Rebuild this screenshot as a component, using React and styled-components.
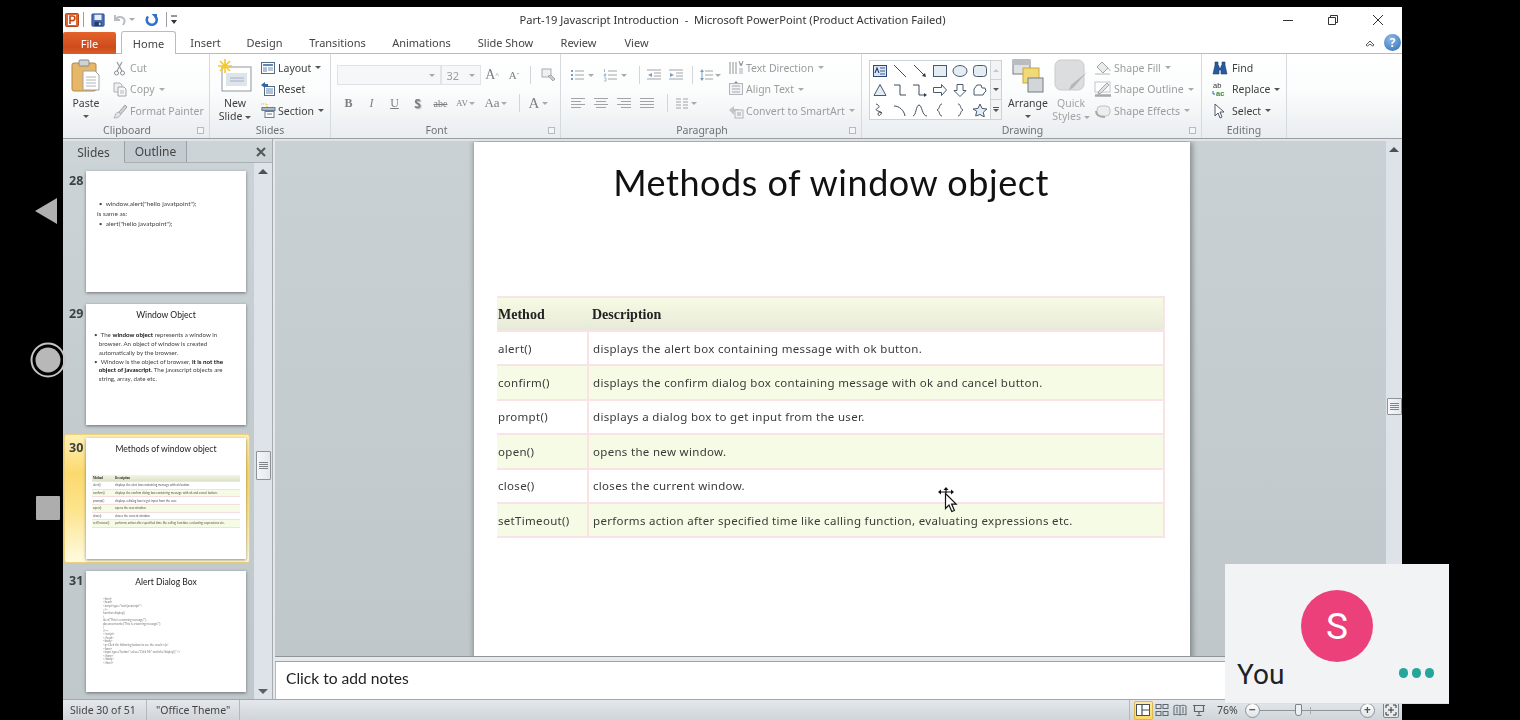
import React from 'react';
import styled, { createGlobalStyle } from 'styled-components';

const Global = createGlobalStyle`
  html, body { margin: 0; padding: 0; background: #000; }
  #root { width: 1520px; height: 720px; overflow: hidden; }
  * { box-sizing: border-box; }
`;

const UI = `"Noto Sans", "Open Sans", sans-serif`;
const CAL = `Lato, "Open Sans", sans-serif`;

const Screen = styled.div`
  position: relative; width: 1520px; height: 720px; background: #000; overflow: hidden;
  padding: 7px 118px 0 63px; font-family: ${UI};
`;
const Win = styled.div`
  width: 1339px; height: 713px; background: #fff; display: flex; flex-direction: column;
  filter: blur(0.4px);
`;

/* title bar */
const TitleBar = styled.div`
  height: 25px; flex: none; display: grid; grid-template-columns: 1fr auto 1fr; align-items: center; background: #fff;
`;
const Quick = styled.div`display: flex; align-items: center; padding-left: 2px; height: 100%;`;
const QSep = styled.span`width: 1px; height: 15px; background: #9aa0a6; margin: 0 ${p => p.$r}px 0 ${p => p.$l}px; flex: none;`;
const Spacer = styled.span`width: ${p => p.$w}px; flex: none;`;
const TitleText = styled.div`font-size: 11.15px; color: #333; white-space: pre;`;
const WinCtl = styled.div`display: flex; justify-content: flex-end; align-items: center; height: 100%;`;
const WinBtn = styled.span`width: 45px; display: flex; justify-content: center; margin-right:${p => p.$mr || 0}px;`;

/* tabs */
const TabRow = styled.div`
  height: 22px; flex: none; display: flex; align-items: flex-end; background: #fff; position: relative;
  border-bottom: 1px solid #b9bdc2;
`;
const FileTab = styled.div`
  width: 53px; height: 22px; margin-right: 5px; margin-bottom: -1px; display: flex; align-items: center; justify-content: center;
  background: linear-gradient(#e4642c, #cf4a1c 70%, #d95f2c); color: #fff; font-size: 11px; border-radius: 2px 2px 0 0;
`;
const Tab = styled.div`
  height: 22px; width: ${p => p.$w}px; display: flex; align-items: center; justify-content: center; font-size: 11px; color: #444;
  ${p => p.$on ? `background:#fff; border:1px solid #b9bdc2; border-bottom:0; border-radius:3px 3px 0 0; margin-bottom:-1px; height:23px;` : ''}
`;
const TabRight = styled.div`margin-left: auto; height: 100%; display: flex; align-items: center; gap: 9px; padding-right: 1px;`;
const Help = styled.span`
  width: 17px; height: 17px; border-radius: 50%; background: radial-gradient(circle at 40% 30%, #8db8e8, #2f6db5);
  color: #fff; font: bold 12px ${UI}; display: flex; align-items: center; justify-content: center;
`;

/* ribbon */
const Ribbon = styled.div`
  height: 85px; flex: none; display: flex; background: linear-gradient(#fff, #fbfcfc 45%, #e9edf0);
  border-bottom: 1px solid #9b9fa3;
`;
const Group = styled.div`
  width: ${p => p.$w}px; flex: none; display: flex; flex-direction: column; border-right: 1px solid #d5dade;
`;
const GroupBody = styled.div`height: 68px; display: flex; padding: 3px 0 0 ${p => p.$pl || 0}px;`;
const GroupLabel = styled.div`
  height: 16px; position: relative; text-align: center; font-size: 10.5px; line-height: 16px; color: #6f7377;
  padding-right: ${p => p.$launch ? 18 : 0}px;
`;
const Launcher = styled.span`
  position: absolute; right: 5px; top: 5px; width: 7px; height: 7px; border: 1px solid #b5bac0; background: #f4f5f6;
`;
const Big = styled.div`
  width: ${p => p.$w || 36}px; flex: none; display: flex; flex-direction: column; align-items: center; padding-top: 1px;
  font-size: 10.5px; line-height: 13px; color: ${p => p.$off ? '#a3a5a7' : '#3f3f3f'}; text-align: center;
  margin-left: ${p => p.$ml || 0}px;
  svg { margin-bottom: 3px; flex: none; }
`;
const Stack = styled.div`display: flex; flex-direction: column; margin-left: ${p => p.$ml || 0}px;`;
const Small = styled.div`
  height: 21.5px; display: flex; align-items: center; gap: 2px; font-size: 10.5px; white-space: nowrap;
  color: ${p => p.$off ? '#9b9da0' : '#3f3f3f'};
`;
const Caret = styled.span`
  display: inline-block; width: 0; height: 0; border: 3px solid transparent; border-top: 3px solid ${p => p.$off ? '#a8aaad' : '#555'};
  border-bottom: 0; margin: ${p => p.$mt || 0}px ${p => p.$m ?? 2}px 0; vertical-align: middle; flex: none;
`;
const Rows = styled.div`display: flex; flex-direction: column; gap: 8px; padding-top: 8px; width: ${p => p.$w ? p.$w + 'px' : 'auto'};`;
const Row = styled.div`display: flex; align-items: center; height: 20px;`;
const Tb = styled.div`
  width: ${p => p.$w || 23}px; height: 20px; flex: none; display: flex; align-items: center;
  justify-content: ${p => p.$left ? 'flex-start' : 'center'};
  color: #7d8083; font-size: ${p => p.$fs || 12}px;
  ${p => p.$serif ? 'font-family: "Liberation Serif", serif;' : ''}
  ${p => p.$b ? 'font-weight: 700;' : ''}
  ${p => p.$i ? 'font-style: italic;' : ''}
  ${p => p.$u ? 'text-decoration: underline;' : ''}
  ${p => p.$strike ? 'text-decoration: line-through;' : ''}
  ${p => p.$shadow ? 'text-shadow: 1px 1px 1px #aaa;' : ''}
`;
const Sup = styled.sup`font-size: 7px;`;
const Vsep = styled.span`width: 1px; height: 18px; background: #d2d6da; margin: 0 ${p => p.$m || 5}px; flex: none;`;
const FontBox = styled.div`
  width: ${p => p.$w}px; height: 20px; flex: none; border: 1px solid #e1e4e7; background: #f6f7f8; display: flex; align-items: center;
  justify-content: flex-end; gap: 8px; padding-right: 3px; font-size: 11px; color: #9b9da0;
`;
const Gallery = styled.div`
  margin-top: 3px; width: 133px; height: 60px; display: flex; border: 1px solid #cdd2d7; background: #fff; flex: none;
`;
const GalleryGrid = styled.div`flex: 1; display: grid; grid-template-columns: repeat(6, 20px); grid-auto-rows: 19.5px; align-items: center; justify-items: center;`;
const GalleryScroll = styled.div`width: 12px; border-left: 1px solid #cdd2d7; display: grid; grid-template-rows: 1fr 1fr 1fr; background: #f1f3f5;`;
const GalleryBtn = styled.span`
  display: flex; align-items: center; justify-content: center; flex-direction: column; gap: 1px;
  border-bottom: ${p => p.$last ? 0 : 1}px solid #cdd2d7;
`;
const GalleryBar = styled.span`width: 6px; height: 1px; background: #555;`;
const Up = styled.span`width:0;height:0;border:3px solid transparent;border-bottom:3px solid ${p => p.$c || '#c5c8cb'};border-top:0;`;

/* main */
const Main = styled.div`flex: 1; min-height: 0; display: flex; background: #dfe4e8;`;
const Panel = styled.div`
  width: 209px; flex: none; margin-top: 2px; display: flex; flex-direction: column;
  background: linear-gradient(#cdd4d8, #c3cbcf 50%, #c1c8cc);
`;
const PanelTabs = styled.div`
  height: 22px; flex: none; display: flex; align-items: stretch; border-bottom: 1px solid #aab1b5;
`;
const PanelTab = styled.div`
  width: ${p => p.$w}px; display: flex; align-items: center; justify-content: center; font-size: 12px; color: #444;
  ${p => p.$on ? 'margin-bottom:-1px; background:#cdd4d8;' : 'background:#c4ccd1; border-left:1px solid #9aa2a6; border-right:1px solid #9aa2a6;'}
`;
const PanelClose = styled.div`margin-left: auto; width: 23px; display: flex; align-items: center; justify-content: center;`;
const PanelBody = styled.div`flex: 1; min-height: 0; display: flex;`;
const ThumbList = styled.div`flex: 1; padding: 5px 0 0 2px; display: flex; flex-direction: column; gap: 6.3px; overflow: hidden;`;
const ThumbRow = styled.div`
  width: 184px; height: 127px; flex: none; padding: 3px; display: flex; border-radius: 2px;
  ${p => p.$on ? `background: linear-gradient(#fff0b4, #fbd96f 30%, #fde48e 60%, #fffbe0); box-shadow: 0 0 0 1px #ecd27e;` : ''}
`;
const ThumbNum = styled.div`width: 18px; flex: none; font: bold 12.5px "Noto Sans", sans-serif; color: #3c4146; line-height: 14px; padding: 3px 0 0 1px;`;
const Thumb = styled.div`
  width: 160px; height: 121px; background: #fff; flex: none; box-shadow: 0 1px 3px rgba(0,0,0,.45); font-family: ${CAL}; color: #333; overflow: hidden;
  filter: blur(.25px);
`;
const ThumbTitle = styled.div`text-align: center; font-size: 8.6px; padding-top: 5px; line-height: 12px; color: #222;`;
const ThumbText = styled.div`font-size: ${p => p.$fs}px; line-height: ${p => p.$lh}px; padding: ${p => p.$p}; color: #444;
  b { color: #111; } div { white-space: nowrap; }`;
const MiniTable = styled.div`margin: 20px 6px 0 6px; font-size: 3px; color: #555;`;
const MiniRow = styled.div`
  display: grid; grid-template-columns: 22px 1fr; height: 7.6px; align-items: center; white-space: nowrap; padding-left: 1px;
  border-bottom: .5px solid #f3dfe0;
  background: ${p => p.$head ? 'linear-gradient(#f2f6e0,#dfe3ce)' : p.$alt ? '#f6fbe6' : '#fff'};
  ${p => p.$head ? 'font-weight:700; font-family:"Liberation Serif",serif; color:#222;' : ''}
`;
const CodeLines = styled.div`padding: 10px 0 0 17px; font-size: 2.9px; line-height: 3.55px; color: #777; white-space: pre;`;

const Scroll = styled.div`
  width: ${p => p.$w}px; flex: none; display: flex; flex-direction: column; align-items: center; background: #dde3e9; overflow: hidden;
`;
const ArrowUp = styled.span`width:0;height:0;border:5px solid transparent;border-bottom:5px solid #4b5157;border-top:0;margin-top:${p => p.$mt}px;flex:none;`;
const ArrowDown = styled.span`width:0;height:0;border:5px solid transparent;border-top:5px solid #5a6066;border-bottom:0;margin:auto 0 5px;flex:none;`;
const ScrollThumb = styled.div`
  width: ${p => p.$w}px; height: ${p => p.$h}px; margin-top: ${p => p.$mt}px; flex: none; border: 1px solid #8d9399; border-radius: 1px;
  background: linear-gradient(90deg, #f5f7f9, #e4e8ec); display: flex; flex-direction: column; justify-content: center; align-items: center; gap: 1px;
  i { width: 9px; height: 1px; background: #7f858b; display: block; }
`;
const Splitter = styled.div`width: 3px; flex: none; background: #e4e8ec; border-left: 1px solid #a6abaf;`;

const Workspace = styled.div`flex: 1; min-width: 0; display: flex; flex-direction: column; margin-top: 2px;`;
const SlideRow = styled.div`height: 516px; flex: none; display: flex;`;
const Stage = styled.div`
  flex: 1; min-width: 0; padding: 1px 0 0 199px; overflow: hidden; background: linear-gradient(#c9d1d4, #bfc7ca);
  border-bottom: 1px solid #8f9498;
`;
const Slide = styled.div`
  width: 716px; height: 520px; background: #fff; box-shadow: 3px 0 5px rgba(0,0,0,.28), -2px 0 4px rgba(0,0,0,.18);
  padding: 16px 25px 0 23px;
`;
const SlideTitle = styled.div`
  font-family: ${CAL}; font-size: 36px; line-height: 48px; text-align: center; color: #111; letter-spacing: .53px;
`;
const Table = styled.table`
  margin-top: 89.5px; width: 668px; border-collapse: collapse; table-layout: fixed;
  font-family: "Noto Sans", sans-serif; font-size: 11.5px; color: #3a3a3a; letter-spacing: .31px;
  border-right: 2px solid #f9e3e5; border-top: 2px solid #f9e3e5; border-bottom: 2px solid #f9e3e5;
`;
const Th = styled.th`
  height: 34.5px; text-align: left; padding: 2px 0 0 ${p => p.$pl}px; font: bold 14px "Liberation Serif", serif; color: #222; letter-spacing: 0;
  background: linear-gradient(#f7fbe4, #e6ead8);
  border-bottom: 2px solid #f9e3e5; width: ${p => p.$w ? p.$w + 'px' : 'auto'};
`;
const Td = styled.td`
  height: 34.4px; padding: 0 0 0 ${p => p.$pl}px; border-bottom: 2px solid #f9e3e5; white-space: nowrap;
  background: ${p => p.$alt ? '#f6fbe6' : '#fff'};
  ${p => p.$first ? 'border-right: 2px solid #f9e3e5;' : ''}
`;
const NotesGap = styled.div`height: 5px; flex: none; background: #e6e9ec; border-bottom: 1px solid #9ea3a7;`;
const Notes = styled.div`
  flex: 1; background: #fff; font-family: ${CAL}; font-size: 15.6px; color: #222; display: flex; align-items: center; padding: 0 0 6px 10px;
  border-left: 1px solid #b6bbbf;
`;

/* status bar */
const Status = styled.div`
  height: 21px; flex: none; display: flex; align-items: center; background: linear-gradient(#e4e8ec, #d0d5da);
  border-top: 1px solid #a3a8ac; font-size: 10.5px; color: #444;
`;
const StatusCell = styled.div`
  width: ${p => p.$w}px; padding: 0 0 1px ${p => p.$pl}px; height: 100%; display: flex; align-items: center; border-right: 1px solid #b3b8bd; white-space: nowrap;
`;
const StatusRight = styled.div`margin-left: auto; display: flex; align-items: center; height: 100%; border-left: 1px solid #b3b8bd; padding-left: 4px; width: 273px;`;
const ViewBtn = styled.div`
  width: 18.5px; height: 19px; flex: none; display: flex; align-items: center; justify-content: center; border-radius: 2px;
  ${p => p.$on ? 'background: linear-gradient(#fde9a6,#fbd665); box-shadow: inset 0 0 0 1px #d9b64f;' : ''}
`;
const Zoom = styled.div`width: 28px; margin-left: 9px; flex:none; font-size: 10.5px;`;
const ZoomCircle = styled.div`
  width: 15px; height: 15px; border-radius: 50%; border: 1px solid #8e949a; background: linear-gradient(#fff, #dfe3e7); flex: none;
  display: flex; align-items: center; justify-content: center; font: bold 12px ${UI}; color: #555; line-height: 1;
`;
const SliderTrack = styled.div`position: relative; width: 100px; height: 1px; background: #8e949a; flex: none;`;
const SliderMark = styled.span`position: absolute; left: 50px; top: -3px; width: 1px; height: 7px; background: #a8adb2;`;
const SliderThumb = styled.span`
  position: absolute; left: 35px; top: -6px; width: 7px; height: 12px; background: #eef1f4; border: 1px solid #7f858b; border-radius: 1px 1px 3px 3px;
`;

/* overlays */
const Nav = styled.div`
  position: absolute; left: 28px; top: 198px; width: 40px; height: 322px;
  display: flex; flex-direction: column; align-items: center; justify-content: space-between;
`;
const NavBack = styled.svg`margin-right: 4px;`;
const Tile = styled.div`
  position: absolute; left: 1225px; top: 564px; width: 224px; height: 140px; background: #f1f3f4; font-family: Roboto, sans-serif;
  border-bottom: 1px solid #dcdfe1; display: flex; flex-direction: column;
`;
const Avatar = styled.div`
  width: 72px; height: 72px; border-radius: 50%; background: #ec407a; color: #fff; margin: 26px 0 0 76px; font-size: 37px;
  display: flex; align-items: center; justify-content: center; flex: none;
`;
const TileFoot = styled.div`display: flex; align-items: center; justify-content: space-between; padding: 0 15px 0 12px; margin-top: -4px; height: 34px;`;
const You = styled.div`font-size: 28px; color: #202124; line-height: 34px;`;
const Dots = styled.div`display: flex; gap: 3.5px; margin-top: -4px;`;
const Dot = styled.span`width: 9.5px; height: 9.5px; border-radius: 50%; background: #26a69a;`;
const Cursor = styled.svg`position: absolute; left: 936px; top: 486px;`;

/* icons */
const S = ({ s = 16, w, h, children }) => <svg width={w || s} height={h || s} viewBox={`0 0 ${w || s} ${h || s}`} fill="none">{children}</svg>;

const PLogo = () => <S s={14}><rect x=".5" y=".5" width="13" height="13" rx="1" fill="#e3642b" stroke="#b8441a" /><rect x="3" y="2" width="8" height="10" fill="#fff" /><path d="M5 11V3h2.6a2 2 0 010 4.600H5" stroke="#c24a1c" strokeWidth="1.700" /></S>;
const Save = () => <svg width="14" height="14" viewBox="0 0 16 16" fill="none"><rect x="1" y="1" width="14" height="14" rx="1" fill="#4a6fb5" stroke="#2c4a86" /><rect x="4" y="2" width="8" height="6" fill="#e8eef8" /><rect x="4" y="10" width="8" height="5" fill="#233c6e" /><rect x="9" y="11" width="2" height="3" fill="#cfd9ea" /></svg>;
const Undo = () => <S s={14}><path d="M3 2v5h5M3.500 7C5 3.500 10 3 12 6c1 1.800.5 4-1 6" stroke="#b9bdc1" strokeWidth="2" /></S>;
const Redo = () => <S s={16}><path d="M5 4.500A5 5 0 1 0 12 4" stroke="#2f73c7" strokeWidth="2.600" /><path d="M8.500 2h5.500v5.500z" fill="#2f73c7" /></S>;
const Custom = () => <S w={8} h={12}><path d="M1 2h6" stroke="#333" /><path d="M1 6h6L4 10z" fill="#333" /></S>;

const Paste = () => <S w={32} h={36}><rect x="2" y="5" width="24" height="28" rx="2" fill="#e6b768" stroke="#b08a4a" /><rect x="9" y="2" width="10" height="6" rx="1" fill="#cfd3d6" stroke="#858a8e" /><path d="M13 13h12l4 4v15H13z" fill="#fff" stroke="#9ea3a7" /><path d="M16 19h10M16 22h10M16 25h10M16 28h10" stroke="#b0b4b8" /></S>;
const Scissors = () => <S><path d="M5 2l5 9M10 2L5 11" stroke="#9a9ea2" strokeWidth="1.300" /><circle cx="4.500" cy="13" r="2" stroke="#8a8e92" /><circle cx="10.500" cy="13" r="2" stroke="#8a8e92" /></S>;
const Copy = () => <S><path d="M2 2h6l2 2v7H2z" fill="#eef0f2" stroke="#aeb2b6" /><path d="M6 6h6l2 2v7H6z" fill="#f8f9fa" stroke="#a2a6aa" /><path d="M8 10h4M8 12h4" stroke="#b4b8bc" /></S>;
const Brush = () => <S><path d="M7 9l6-7 2 2-6 7z" fill="#cfd2d5" stroke="#a0a4a8" /><path d="M2 15c1-1 1-5 4-6l3 2c-1 3-4 4-7 4z" fill="#e4e5e6" stroke="#b0b4b8" /></S>;
const NewSlide = () => <S w={36} h={36}><rect x="5" y="9" width="29" height="24" fill="#fff" stroke="#8d97a3" /><rect x="9" y="15" width="21" height="13" fill="#dde4ec" /><path d="M13 20h14M13 23h14" stroke="#a9b4c0" /><path d="M8 1v14M1 8h14M3 3l10 10M13 3L3 13" stroke="#f4c92e" strokeWidth="1.600" /></S>;
const Layout = () => <S><rect x="1.500" y="2.500" width="13" height="11" fill="#fff" stroke="#566a82" /><rect x="3" y="4" width="10" height="2" fill="#5e88b8" /><rect x="3" y="7" width="4" height="5" fill="#a9c2dd" /><path d="M8 8h5M8 10h5" stroke="#7b8ea3" /></S>;
const Reset = () => <S><rect x="4.500" y="5.500" width="10" height="9" fill="#fff" stroke="#566a82" /><path d="M6 8h7M6 10h7M6 12h7" stroke="#5e88b8" /><path d="M1 4l4-3v2h3v3H5v1z" fill="#2f66a8" /></S>;
const Section = () => <S><path d="M1 1h6v5H1" stroke="#f0cb3a" strokeWidth="1.400" strokeDasharray="1 1" /><rect x="2" y="4.500" width="13" height="3" fill="#a9b8c8" stroke="#6b7d90" /><rect x="5" y="8.500" width="9" height="6" fill="#fff" stroke="#6b7d90" /><path d="M7 11h5" stroke="#6b7d90" /></S>;

const Lines = ({ a = [[1, 15], [1, 15], [1, 15], [1, 15]], c = '#a0a4a8' }) => (
  <S s={16} w={16} h={14}>{a.map(([x1, x2], i) => <path key={i} d={`M${x1} ${2.5 + i * 3}H${x2}`} stroke={c} />)}</S>
);
const Bullets = () => <S w={14} h={14}><path d="M5 3h9M5 7h9M5 11h9" stroke="#a0a4a8" /><path d="M1 2h2v2H1zM1 6h2v2H1zM1 10h2v2H1z" fill="#7f9cc0" /></S>;
const Numbers = () => <S w={14} h={14}><path d="M5 3h9M5 7h9M5 11h9" stroke="#a0a4a8" /><path d="M1.500 1v3M1 6h2v1H1v1h2M1 10h2v3H1" stroke="#8fa8c6" strokeWidth=".8" /></S>;
const Indent = ({ flip }) => <S w={16} h={14}><path d="M1 2h14M8 5h7M8 8h7M1 11h14" stroke="#a0a4a8" /><path d={flip ? 'M2 5l4 2-4 2z' : 'M6 5L2 7l4 2z'} fill="#7f9cc0" /></S>;
const LineSp = () => <S w={14} h={14}><path d="M6 3h8M6 7h8M6 11h8" stroke="#a0a4a8" /><path d="M3 1l2 3H1zM3 13l2-3H1z" fill="#7f9cc0" /><path d="M3 4v6" stroke="#7f9cc0" /></S>;
const Cols = () => <S w={13} h={12}><path d="M1 2h5M1 5h5M1 8h5M1 11h5M8 2h5M8 5h5M8 8h5M8 11h5" stroke="#a0a4a8" /></S>;
const TextDir = () => <S><path d="M2 2v12M5 2v12M8 2v12" stroke="#8e9296" /><path d="M11 1l2 5 2-5M11.500 4h3" stroke="#8e9296" /><path d="M12 8v6M14 8v6" stroke="#a8acb0" /></S>;
const AlignText = () => <S><rect x="1.500" y="2.500" width="13" height="11" fill="#f2f3f4" stroke="#b2b6ba" /><path d="M4 5h8M4 8h8M4 11h8" stroke="#a4a8ac" /><path d="M8 0l2 2H6z" fill="#8e9296" /></S>;
const SmartArt = () => <S><path d="M1 7l5-4v3h5v3H6v3z" fill="#c2c5c8" /><rect x="7" y="7" width="8" height="8" fill="#f1f2f3" stroke="#b2b6ba" /><path d="M9 10h4M9 12h4" stroke="#a4a8ac" /></S>;
const ClearFmt = () => <S><rect x="2" y="2" width="9" height="8" fill="#eef0f2" stroke="#a8acb0" /><path d="M8 9l5 5 2-2-4-4z" fill="#d7c3cc" stroke="#a8acb0" /></S>;

const sk = { stroke: '#3e4c5c', fill: 'none' };
const shapes = [
  <S w={16} h={14} key="a"><rect x="1.500" y="1.500" width="13" height="11" fill="#dbe6f2" stroke="#2c4a7a" /><path d="M8 4h5M8 7h5M8 10h5" stroke="#3e5c86" /><path d="M3 9l2-5 2 5" stroke="#1f3f73" strokeWidth="1.100" /></S>,
  <S w={16} h={14} key="b"><path d="M2 1l12 12" {...sk} /></S>,
  <S w={16} h={14} key="c"><path d="M2 1l11 11" {...sk} /><path d="M14 13l-4-1 3-3z" fill="#2c3a4a" /></S>,
  <S w={16} h={14} key="d"><rect x="1.500" y="1.500" width="13" height="11" fill="#e4ecf4" stroke="#4a5a6e" /></S>,
  <S w={16} h={14} key="e"><ellipse cx="8" cy="7" rx="7" ry="5.500" fill="#e4ecf4" stroke="#4a5a6e" /></S>,
  <S w={16} h={14} key="f"><rect x="1.500" y="1.500" width="13" height="11" rx="3" fill="#e4ecf4" stroke="#4a5a6e" /></S>,
  <S w={16} h={14} key="g"><path d="M8 1.500l6 11H2z" fill="#e4ecf4" stroke="#4a5a6e" /></S>,
  <S w={16} h={14} key="h"><path d="M2 2h6v10h6" {...sk} /></S>,
  <S w={16} h={14} key="i"><path d="M1 2h6v10h5" {...sk} /><path d="M15 12l-3-2v4z" fill="#2c3a4a" /></S>,
  <S w={16} h={14} key="j"><path d="M1.500 4.500h8v-3l5 5.500-5 5.500v-3h-8z" fill="#fff" stroke="#4a5a6e" /></S>,
  <S w={16} h={14} key="k"><path d="M5 1.500h6v6h3l-6 6-6-6h3z" fill="#fff" stroke="#4a5a6e" /></S>,
  <S w={16} h={14} key="l"><path d="M2 12V6l3-4h4l1 3h3l1 3-2 2-1 2z" fill="#fff" stroke="#4a5a6e" /></S>,
  <S w={16} h={14} key="m"><path d="M4 1c3 1 4 3 2 4S3 7 6 8s4 1 3 3-3 2-3 0 3-2 4-1" {...sk} /></S>,
  <S w={16} h={14} key="n"><path d="M2 3c5 0 10 4 11 10" {...sk} /></S>,
  <S w={16} h={14} key="o"><path d="M1 13C4 13 4 2 7 2s3 11 8 11" {...sk} /></S>,
  <S w={16} h={14} key="p"><path d="M10 1C7 1 8 6 5 7c3 1 2 6 5 6" {...sk} /></S>,
  <S w={16} h={14} key="q"><path d="M6 1c3 0 2 5 5 6-3 1-2 6-5 6" {...sk} /></S>,
  <S w={16} h={14} key="r"><path d="M8 1l2 4.400 5 .6-3.700 3.200 1 4.800L8 11.500 3.700 13l1-4.800L1 6l5-.6z" fill="#e4ecf4" stroke="#4a5a6e" /></S>,
];
const Arrange = () => <S w={34} h={36}><rect x="2" y="2" width="17" height="14" fill="#dfe2e5" stroke="#777c82" /><rect x="2" y="2" width="17" height="5" fill="#b9bdc2" /><rect x="12" y="10" width="16" height="15" fill="#f2d978" stroke="#c9a83c" /><rect x="17" y="20" width="15" height="14" fill="#d3d6d9" stroke="#777c82" /></S>;
const QuickStyles = () => <S w={34} h={36}><rect x="1" y="2" width="29" height="30" rx="6" fill="#dcdddf" stroke="#c8cacc" /><path d="M33 14L19 30l-4 2 2-5z" fill="#b4b6b8" /></S>;
const Fill = () => <S w={18} h={16}><path d="M8 2l6 6-5 5-6-6z" fill="#e9eaeb" stroke="#a2a6aa" /><path d="M1 14h15" stroke="#d8dadc" strokeWidth="2" /><path d="M14 8c1 1 2 2 2 3" stroke="#a2a6aa" /></S>;
const Outline = () => <S w={18} h={16}><rect x="1" y="1" width="15" height="10" fill="#fff" stroke="#c2c5c8" /><path d="M5 10l8-8 2 2-8 8-3 1z" fill="#e2e3e4" stroke="#a2a6aa" /><path d="M1 14.500h16" stroke="#a6a8aa" strokeWidth="2.500" /></S>;
const Effects = () => <S w={18} h={16}><rect x="3" y="3" width="13" height="10" rx="4" fill="#eceded" stroke="#c0c2c4" /><path d="M2 8c0 4 3 6 9 6" stroke="#a8aaac" strokeWidth="2" /></S>;
const Binoculars = () => <S w={18} h={16}><path d="M3 2h3v3l1 1v2h2V6l1-1V2h3v3l2 9H9V10H7v4H1l2-9z" fill="#2a5a9e" stroke="#1b3f75" strokeWidth=".6" /></S>;
const ReplaceI = () => <svg width="18" height="16" viewBox="0 0 18 16"><text x="1" y="7" fontFamily="Liberation Sans" fontSize="7.5" fill="#333">ab</text><text x="4" y="14.5" fontFamily="Liberation Sans" fontSize="7.5" fontWeight="700" fill="#3d8a2e">ac</text><path d="M1 10v3h2" stroke="#2f66a8" fill="none" /></svg>;
const SelectI = () => <S w={18} h={16}><path d="M3 1v12l3-3 2 5 2-1-2-5h4z" fill="#fff" stroke="#4a5a6e" /></S>;

const NormalV = () => <S s={14}><rect x=".5" y="1.500" width="13" height="11" fill="#fff" stroke="#46505a" /><path d="M6 1.500v11M6 7h7" stroke="#46505a" strokeWidth="1.200" /></S>;
const SorterV = () => <S s={14}><rect x="1" y="1.500" width="5" height="4" stroke="#5d666f" /><rect x="8" y="1.500" width="5" height="4" stroke="#5d666f" /><rect x="1" y="8.500" width="5" height="4" stroke="#5d666f" /><rect x="8" y="8.500" width="5" height="4" stroke="#5d666f" /></S>;
const ReadV = () => <S s={14}><path d="M7 3C5 2 3 2 1 3v9c2-1 4-1 6 0 2-1 4-1 6 0V3c-2-1-4-1-6 0zM7 3v9M3 5h2M3 7h2M3 9h2M9 5h2M9 7h2M9 9h2" stroke="#5d666f" /></S>;
const ShowV = () => <S s={14}><path d="M1 2.500h12M2.500 2.500v6h9v-6M7 8.500v3M4.500 12.500h5" stroke="#5d666f" strokeWidth="1.200" /></S>;
const Fit = () => <S s={16}><rect x=".5" y=".5" width="15" height="15" rx="1.500" fill="#e7eaed" stroke="#7f858b" /><path d="M3 6V3h3M10 3h3v3M13 10v3h-3M6 13H3v-3M8 5v6M5 8h6" stroke="#333" /></S>;

const Rows3 = () => <><i /><i /><i /><i /></>;

const tableData = [
  ['alert()', 'displays the alert box containing message with ok button.'],
  ['confirm()', 'displays the confirm dialog box containing message with ok and cancel button.'],
  ['prompt()', 'displays a dialog box to get input from the user.'],
  ['open()', 'opens the new window.'],
  ['close()', 'closes the current window.'],
  ['setTimeout()', 'performs action after specified time like calling function, evaluating expressions etc.'],
];

const tabs = [['Home', 55, true], ['Insert', 59], ['Design', 59], ['Transitions', 87], ['Animations', 81], ['Slide Show', 87], ['Review', 59], ['View', 57]];

const code = `<html>
<head>
<script type="text/javascript">
<!--
function display()
{
alert("This is a warning message!");
document.write("This is a warning message!");
}
//-->
</script>
</head>
<body>
<p>Click the following button to see the result:</p>
<form>
<input type="button" value="Click Me" onclick="display();" />
</form>
</body>
</html>`;

export default function App() {
  return (
    <Screen>
      <Global />
      <Win>
        <TitleBar>
          <Quick>
            <PLogo /><QSep $l={4} $r={7} /><Save /><Spacer $w={7} /><Undo /><Caret $off $m={3} /><Spacer $w={5} /><Redo /><QSep $l={7} $r={3} /><Custom />
          </Quick>
          <TitleText>{'Part-19 Javascript Introduction  -  Microsoft PowerPoint (Product Activation Failed)'}</TitleText>
          <WinCtl>
            <WinBtn><S w={12} h={12}><path d="M1 6.500h10" stroke="#333" /></S></WinBtn>
            <WinBtn><S w={12} h={12}><path d="M1.500 3.500h7v7h-7zM3.500 3.500v-2h7v7h-2" stroke="#333" /></S></WinBtn>
            <WinBtn $mr={2}><S w={12} h={12}><path d="M1 1l10 10M11 1L1 11" stroke="#333" /></S></WinBtn>
          </WinCtl>
        </TitleBar>
        <TabRow>
          <FileTab>File</FileTab>
          {tabs.map(([t, w, on]) => <Tab key={t} $w={w} $on={on}>{t}</Tab>)}
          <TabRight>
            <S w={10} h={10}><path d="M1 7l4-4 4 4-1.500 1L5 6 2.500 8z" stroke="#444" strokeWidth=".9" /></S>
            <Help>?</Help>
          </TabRight>
        </TabRow>
        <Ribbon>
          <Group $w={147}>
            <GroupBody $pl={5}>
              <Big>
                <Paste />
                Paste
                <Caret $m={0} $mt={5} />
              </Big>
              <Stack $ml={8}>
                <Small $off><Scissors />Cut</Small>
                <Small $off><Copy />Copy<Caret $off /></Small>
                <Small $off><Brush />Format Painter</Small>
              </Stack>
            </GroupBody>
            <GroupLabel $launch>Clipboard<Launcher /></GroupLabel>
          </Group>
          <Group $w={121}>
            <GroupBody $pl={7}>
              <Big>
                <NewSlide />
                New
                <span>Slide <Caret $m={0} /></span>
              </Big>
              <Stack $ml={7}>
                <Small><Layout />Layout<Caret /></Small>
                <Small><Reset />Reset</Small>
                <Small><Section />Section<Caret /></Small>
              </Stack>
            </GroupBody>
            <GroupLabel>Slides</GroupLabel>
          </Group>
          <Group $w={230}>
            <GroupBody $pl={6}>
              <Rows>
                <Row>
                  <FontBox $w={104}><Caret $off /></FontBox>
                  <FontBox $w={40}>32<Caret $off /></FontBox>
                  <Tb $w={22} $fs={14} $serif>A<Sup>^</Sup></Tb>
                  <Tb $w={22} $fs={11} $serif>A<Sup>ˇ</Sup></Tb>
                  <Vsep />
                  <Tb $w={24}><ClearFmt /></Tb>
                </Row>
                <Row>
                  <Tb $serif $b>B</Tb>
                  <Tb $serif $i>I</Tb>
                  <Tb $serif $u>U</Tb>
                  <Tb $b $shadow>S</Tb>
                  <Tb $fs={10} $serif $strike>abe</Tb>
                  <Tb $w={28} $fs={9} $serif>AV<Caret $off $m={1} /></Tb>
                  <Tb $w={32} $fs={13} $serif>Aa<Caret $off $m={1} /></Tb>
                  <Vsep $m={7} />
                  <Tb $w={26} $fs={15} $serif>A<Caret $off $m={3} /></Tb>
                </Row>
              </Rows>
            </GroupBody>
            <GroupLabel $launch>Font<Launcher /></GroupLabel>
          </Group>
          <Group $w={301}>
            <GroupBody $pl={9}>
              <Rows $w={158}>
                <Row>
                  <Tb $w={33} $left><Bullets /><Caret $off $m={4} /></Tb>
                  <Tb $w={33} $left><Numbers /><Caret $off $m={4} /></Tb>
                  <Vsep $m={3} />
                  <Tb $w={22}><Indent /></Tb>
                  <Tb $w={22}><Indent flip /></Tb>
                  <Vsep />
                  <Tb $w={26}><LineSp /><Caret $off $m={2} /></Tb>
                </Row>
                <Row>
                  <Tb $left><Lines a={[[1, 15], [1, 11], [1, 15], [1, 11]]} /></Tb>
                  <Tb $left><Lines a={[[1, 15], [3, 13], [1, 15], [3, 13]]} /></Tb>
                  <Tb $left><Lines a={[[1, 15], [5, 15], [1, 15], [5, 15]]} /></Tb>
                  <Tb $left><Lines /></Tb>
                  <Vsep $m={5} />
                  <Tb $w={28}><Cols /><Caret $off $m={3} /></Tb>
                </Row>
              </Rows>
              <Stack>
                <Small $off><TextDir />Text Direction<Caret $off /></Small>
                <Small $off><AlignText />Align Text<Caret $off /></Small>
                <Small $off><SmartArt />Convert to SmartArt<Caret $off /></Small>
              </Stack>
            </GroupBody>
            <GroupLabel $launch>Paragraph<Launcher /></GroupLabel>
          </Group>
          <Group $w={340}>
            <GroupBody $pl={7}>
              <Gallery>
                <GalleryGrid>{shapes}</GalleryGrid>
                <GalleryScroll>
                  <GalleryBtn><Up /></GalleryBtn>
                  <GalleryBtn><Caret $m={0} /></GalleryBtn>
                  <GalleryBtn $last><GalleryBar /><Caret $m={0} /></GalleryBtn>
                </GalleryScroll>
              </Gallery>
              <Big $w={44} $ml={4}><Arrange />Arrange<Caret $m={0} $mt={5} /></Big>
              <Big $w={42} $off>
                <QuickStyles />
                Quick
                <span>Styles <Caret $off $m={0} /></span>
              </Big>
              <Stack $ml={2}>
                <Small $off><Fill />Shape Fill<Caret $off /></Small>
                <Small $off><Outline />Shape Outline<Caret $off /></Small>
                <Small $off><Effects />Shape Effects<Caret $off /></Small>
              </Stack>
            </GroupBody>
            <GroupLabel $launch>Drawing<Launcher /></GroupLabel>
          </Group>
          <Group $w={85}>
            <GroupBody $pl={10}>
              <Stack>
                <Small><Binoculars />Find</Small>
                <Small><ReplaceI />Replace<Caret /></Small>
                <Small><SelectI />Select<Caret /></Small>
              </Stack>
            </GroupBody>
            <GroupLabel>Editing</GroupLabel>
          </Group>
        </Ribbon>
        <Main>
          <Panel>
            <PanelTabs>
              <PanelTab $w={61} $on>Slides</PanelTab>
              <PanelTab $w={63}>Outline</PanelTab>
              <PanelClose><S w={10} h={10}><path d="M1 1l8 8M9 1L1 9" stroke="#555" strokeWidth="2" /></S></PanelClose>
            </PanelTabs>
            <PanelBody>
              <ThumbList>
                <ThumbRow>
                  <ThumbNum>28</ThumbNum>
                  <Thumb>
                    <ThumbText $p="28px 0 0 11px" $lh={10} $fs={6.5}>
                      <div>&nbsp;•&nbsp; window.alert("hello javatpoint");</div>
                      <div>is same as:</div>
                      <div>&nbsp;•&nbsp; alert("hello javatpoint");</div>
                    </ThumbText>
                  </Thumb>
                </ThumbRow>
                <ThumbRow>
                  <ThumbNum>29</ThumbNum>
                  <Thumb>
                    <ThumbTitle>Window Object</ThumbTitle>
                    <ThumbText $p="10px 0 0 8px" $lh={8.8} $fs={6.2}>
                      <div>•&nbsp; The <b>window object</b> represents a window in</div>
                      <div>&nbsp;&nbsp; browser. An object of window is created</div>
                      <div>&nbsp;&nbsp; automatically by the browser.</div>
                      <div>•&nbsp; Window is the object of browser, <b>it is not the</b></div>
                      <div>&nbsp;&nbsp; <b>object of javascript.</b> The javascript objects are</div>
                      <div>&nbsp;&nbsp; string, array, date etc.</div>
                    </ThumbText>
                  </Thumb>
                </ThumbRow>
                <ThumbRow $on>
                  <ThumbNum>30</ThumbNum>
                  <Thumb>
                    <ThumbTitle>Methods of window object</ThumbTitle>
                    <MiniTable>
                      <MiniRow $head><span>Method</span><span>Description</span></MiniRow>
                      {tableData.map(([m, d], i) => (
                        <MiniRow key={m} $alt={i % 2 === 1}><span>{m}</span><span>{d}</span></MiniRow>
                      ))}
                    </MiniTable>
                  </Thumb>
                </ThumbRow>
                <ThumbRow>
                  <ThumbNum>31</ThumbNum>
                  <Thumb>
                    <ThumbTitle>Alert Dialog Box</ThumbTitle>
                    <CodeLines>{code}</CodeLines>
                  </Thumb>
                </ThumbRow>
              </ThumbList>
              <Scroll $w={18}>
                <ArrowUp $mt={6} />
                <ScrollThumb $w={15} $h={29} $mt={277}><Rows3 /></ScrollThumb>
                <ArrowDown />
              </Scroll>
            </PanelBody>
          </Panel>
          <Splitter />
          <Workspace>
            <SlideRow>
              <Stage>
                <Slide>
                  <SlideTitle>Methods of window object</SlideTitle>
                  <Table>
                    <thead>
                      <tr>
                        <Th $w={91} $pl={1}>Method</Th>
                        <Th $pl={4}>Description</Th>
                      </tr>
                    </thead>
                    <tbody>
                      {tableData.map(([m, d], i) => (
                        <tr key={m}>
                          <Td $pl={1} $first $alt={i % 2 === 1}>{m}</Td>
                          <Td $pl={4} $alt={i % 2 === 1}>{d}</Td>
                        </tr>
                      ))}
                    </tbody>
                  </Table>
                </Slide>
              </Stage>
              <Scroll $w={16}>
                <ArrowUp $mt={6} />
                <ScrollThumb $w={15} $h={17} $mt={246}><Rows3 /></ScrollThumb>
              </Scroll>
            </SlideRow>
            <NotesGap />
            <Notes>Click to add notes</Notes>
          </Workspace>
        </Main>
        <Status>
          <StatusCell $w={84} $pl={7}>Slide 30 of 51</StatusCell>
          <StatusCell $w={93} $pl={9}>"Office Theme"</StatusCell>
          <StatusRight>
            <ViewBtn $on><NormalV /></ViewBtn>
            <ViewBtn><SorterV /></ViewBtn>
            <ViewBtn><ReadV /></ViewBtn>
            <ViewBtn><ShowV /></ViewBtn>
            <Zoom>76%</Zoom>
            <ZoomCircle>−</ZoomCircle>
            <SliderTrack><SliderMark /><SliderThumb /></SliderTrack>
            <ZoomCircle>+</ZoomCircle>
            <Spacer $w={8} />
            <Fit />
          </StatusRight>
        </Status>
      </Win>

      <Nav>
        <NavBack width="24" height="26" viewBox="0 0 24 26"><path d="M23 0v26L1 13z" fill="#b0b0b0" /></NavBack>
        <svg width="36" height="36" viewBox="0 0 36 36"><circle cx="18" cy="18" r="16.500" stroke="#c4c4c4" strokeWidth="2" fill="none" /><circle cx="18" cy="18" r="12.500" fill="#b8b8b8" /></svg>
        <svg width="24" height="24" viewBox="0 0 24 24"><rect width="24" height="24" rx="1" fill="#adadad" /></svg>
      </Nav>

      <Cursor width="22" height="30" viewBox="0 0 22 30">
        <path d="M10 1l2.500 3h-5zM2 6l3-2.500v5zM18 6l-3-2.500v5z" fill="#111" />
        <path d="M10 4v3M5 6h10" stroke="#111" strokeWidth="1.200" />
        <path d="M9.500 7.500v15l3.500-3.500 2.800 6.500 2.600-1.100-2.800-6.300h4.600z" fill="#fff" stroke="#111" strokeWidth="1.200" />
      </Cursor>

      <Tile>
        <Avatar>S</Avatar>
        <TileFoot>
          <You>You</You>
          <Dots><Dot /><Dot /><Dot /></Dots>
        </TileFoot>
      </Tile>
    </Screen>
  );
}
